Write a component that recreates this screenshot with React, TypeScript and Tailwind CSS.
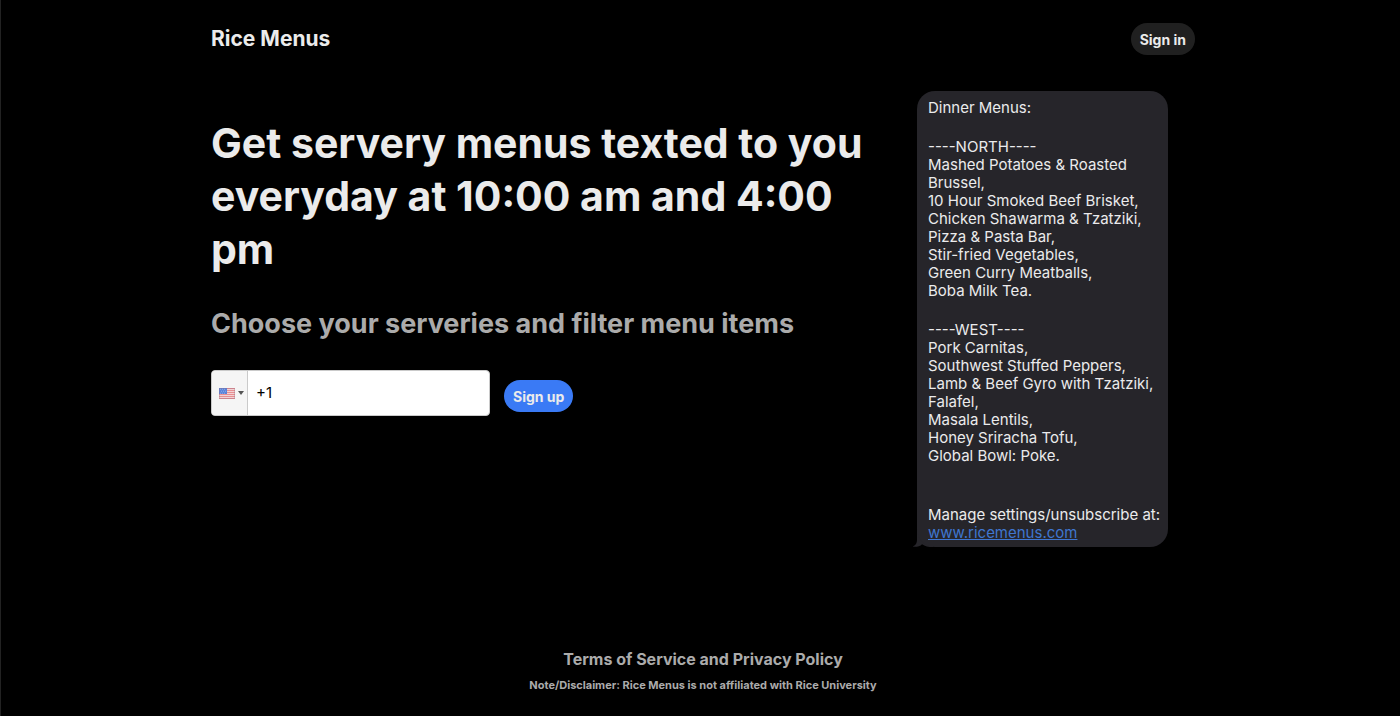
const north = [
  "Mashed Potatoes & Roasted Brussel,",
  "10 Hour Smoked Beef Brisket,",
  "Chicken Shawarma & Tzatziki,",
  "Pizza & Pasta Bar,",
  "Stir-fried Vegetables,",
  "Green Curry Meatballs,",
  "Boba Milk Tea.",
];

const west = [
  "Pork Carnitas,",
  "Southwest Stuffed Peppers,",
  "Lamb & Beef Gyro with Tzatziki, Falafel,",
  "Masala Lentils,",
  "Honey Sriracha Tofu,",
  "Global Bowl: Poke.",
];

function Flag() {
  return (
    <svg viewBox="0 0 16 11" className="h-[11px] w-4" aria-hidden="true">
      <rect width="16" height="11" fill="#f3d3d5" />
      {[0, 2, 4, 6, 8, 10].map((y) => (
        <rect key={y} y={y} width="16" height="1" fill="#e88f92" />
      ))}
      <rect width="8" height="6" fill="#5b83da" />
      {[1, 3, 5].map((y) =>
        [1, 3, 5].map((x) => (
          <rect key={`${x}-${y}`} x={x + (y === 3 ? 1 : 0)} y={y - 0.2} width="0.8" height="0.8" fill="#a9c0ee" />
        )),
      )}
      <rect x="0.5" y="0.5" width="15" height="10" fill="none" stroke="#8a6a80" strokeOpacity="0.3" />
    </svg>
  );
}

function MenuList({ name, items }: { name: string; items: string[] }) {
  return (
    <section>
      <h3>----{name}----</h3>
      <ul>
        {items.map((item) => (
          <li key={item}>{item}</li>
        ))}
      </ul>
    </section>
  );
}

function MessageBubble() {
  return (
    <div className="relative w-[251px] shrink-0">
      <svg viewBox="0 0 24 20" className="absolute bottom-0 -left-1 h-5 w-6" aria-hidden="true">
        <path d="M4 0 V12 C4 16 3 18 0 19.2 C0 20.2 7 20 9 17.2 C12 19.4 15 20 20 20 L24 0 Z" fill="#26252a" />
      </svg>
      <div className="relative flex flex-col gap-[21px] rounded-[18px] bg-[#26252a] px-[11px] pt-2 pb-[5px] text-[15px] leading-[18px] text-[#ebebec]">
        <p>Dinner Menus:</p>
        <MenuList name="NORTH" items={north} />
        <MenuList name="WEST" items={west} />
        <p className="pt-5 whitespace-nowrap">
          Manage settings/unsubscribe at:
          <br />
          <a href="#menus" className="text-[#3f76d0] underline">
            www.ricemenus.com
          </a>
        </p>
      </div>
    </div>
  );
}

export default function App() {
  return (
    <div className="min-h-screen border-l border-[#222222] bg-black pl-[5px] font-['Inter','Liberation_Sans',sans-serif] text-[#ebebeb]">
      <div className="mx-auto flex min-h-screen max-w-[984px] flex-col">
        <header className="flex items-center justify-between pt-[22px]">
          <a href="#home" className="text-[21px] leading-[34px] font-bold">
            Rice Menus
          </a>
          <button type="button" className="h-8 rounded-full bg-[#202020] px-[9px] text-[14px] font-bold">
            Sign in
          </button>
        </header>

        <main className="flex justify-between gap-8 pt-[35px] pr-[27px]">
          <div className="max-w-[674px] pt-[26px]">
            <h1 className="text-[41px] leading-[53px] font-bold">
              Get servery menus texted to you everyday at 10:00 am and 4:00 pm
            </h1>
            <h2 className="pt-[30px] text-[27px] leading-[36px] font-bold text-[#ababab]">
              Choose your serveries and filter menu items
            </h2>
            <form className="flex items-center gap-[14px] pt-7">
              <div className="flex h-[46px] w-[279px] overflow-hidden rounded-[4px] border border-[#cacaca] bg-white">
                <button
                  type="button"
                  aria-label="Country: United States"
                  className="flex w-9 items-center gap-[3px] border-r border-[#cacaca] bg-[#f5f5f5] pl-[7px]"
                >
                  <Flag />
                  <svg viewBox="0 0 6 4" className="h-1 w-[6px]" aria-hidden="true">
                    <path d="M0 0 H6 L3 4 Z" fill="#555" />
                  </svg>
                </button>
                <input
                  type="tel"
                  aria-label="Phone number"
                  defaultValue="+1"
                  className="min-w-0 flex-1 pl-2 text-[15px] text-black outline-none"
                />
              </div>
              <button type="submit" className="mt-[6px] h-8 rounded-full bg-[#3a7af5] px-[9px] text-[14px] font-bold">
                Sign up
              </button>
            </form>
          </div>
          <MessageBubble />
        </main>

        <footer className="mt-auto flex flex-col items-center pb-[22px] text-[#ababab]">
          <a href="#terms" className="text-[16px] leading-7 font-bold">
            Terms of Service and Privacy Policy
          </a>
          <p className="pt-[3px] text-[11px] leading-[18px] font-bold">
            Note/Disclaimer: Rice Menus is not affiliated with Rice University
          </p>
        </footer>
      </div>
    </div>
  );
}
